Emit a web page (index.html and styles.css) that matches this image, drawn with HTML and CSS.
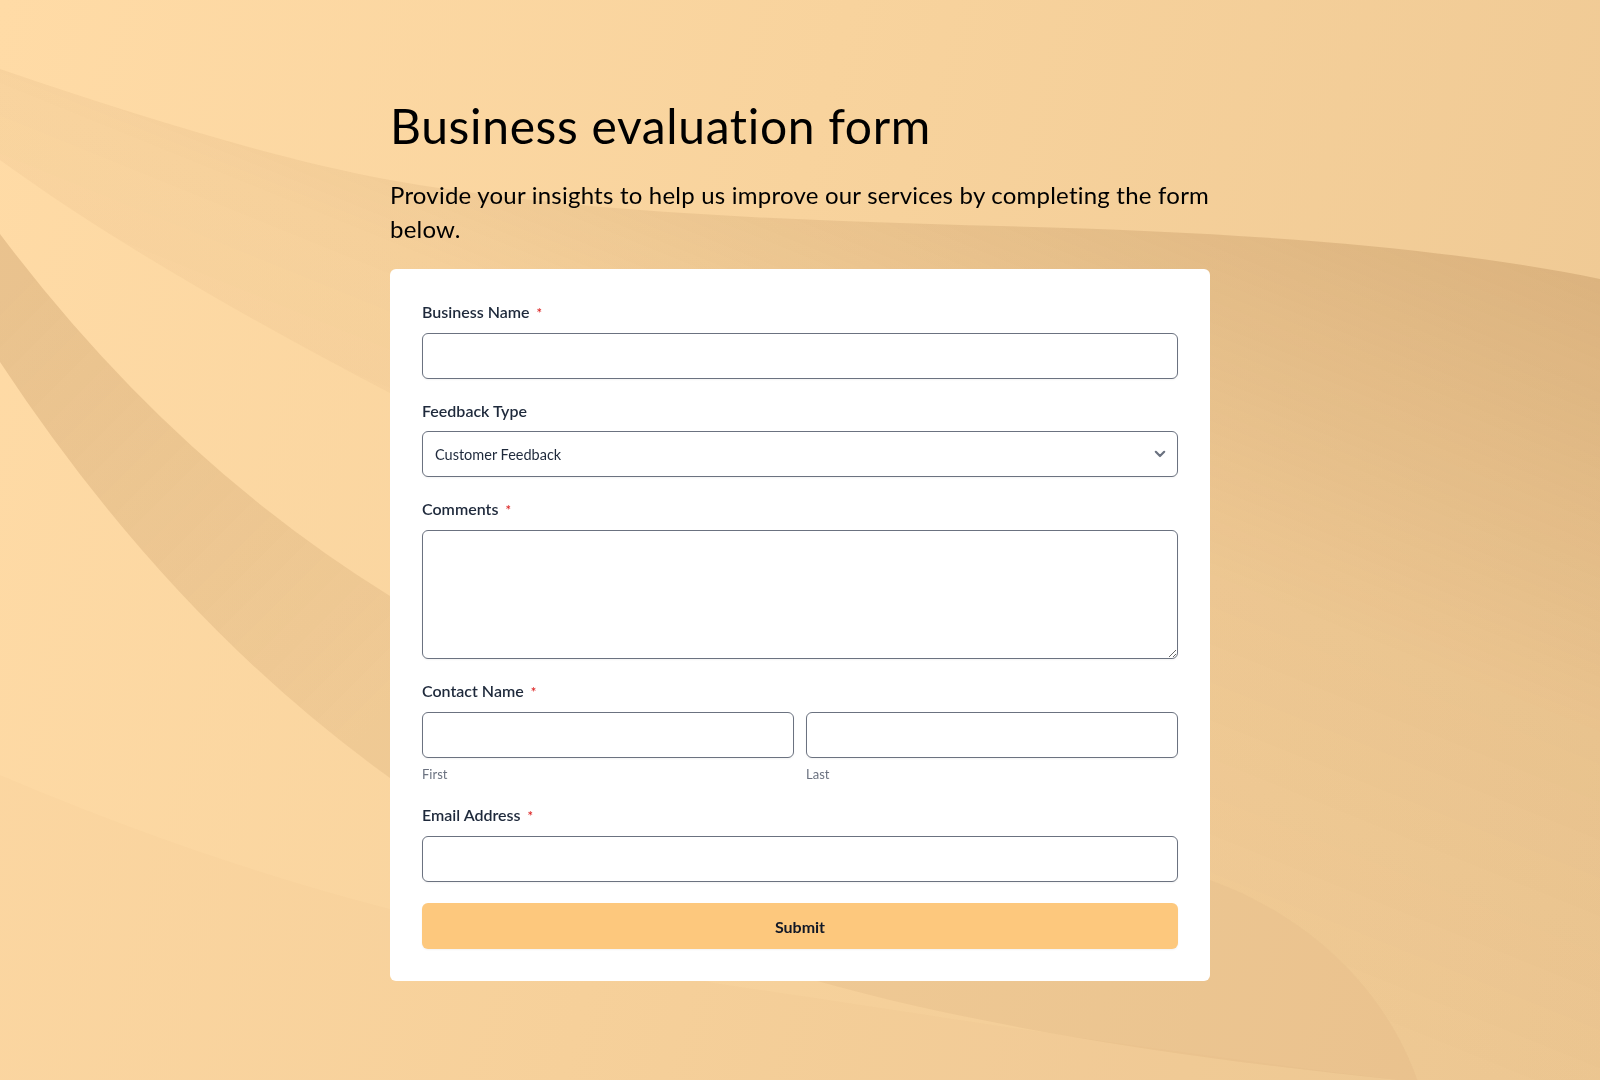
FILE: index.html
```html
<!DOCTYPE html>
<html lang="en">
<head>
    <meta charset="UTF-8">
    <meta name="viewport" content="width=device-width, initial-scale=1.0">
    <title>Business evaluation form</title>
    <link rel="stylesheet" href="styles.css">
</head>
<body>

<!-- Soft wave shapes behind the form -->
<svg class="backdrop" viewBox="0 0 1600 1080" preserveAspectRatio="none" aria-hidden="true">
    <defs>
        <linearGradient id="wave-top" gradientUnits="userSpaceOnUse" x1="1600" y1="260" x2="1300" y2="1000">
            <stop offset="0" stop-color="#966432" stop-opacity="0.23"/>
            <stop offset="0.55" stop-color="#966432" stop-opacity="0.06"/>
            <stop offset="1" stop-color="#966432" stop-opacity="0.02"/>
        </linearGradient>
        <linearGradient id="wave-band" gradientUnits="userSpaceOnUse" x1="0" y1="300" x2="400" y2="700">
            <stop offset="0" stop-color="#966432" stop-opacity="0.2"/>
            <stop offset="1" stop-color="#966432" stop-opacity="0.1"/>
        </linearGradient>
    </defs>
    <path d="M0,69 C150,120 280,160 390,180 C560,210 760,220 1000,226 C1250,232 1450,248 1600,279 L1600,1082 L1418,1082 C1390,1000 1320,920 1210,880 L800,600 C560,500 470,440 390,393 C250,320 110,240 0,160 Z" fill="url(#wave-top)"/>
    <path d="M0,234 Q170,460 390,596 L600,700 L600,860 L390,778 Q170,620 0,362 Z" fill="url(#wave-band)"/>
    <path d="M0,775 Q200,860 390,909 L714,983 C918,1013 1122,1047 1418,1082 L0,1082 Z" fill="#966432" fill-opacity="0.02"/>
    <path d="M600,900 C800,1000 1100,1050 1418,1082 C1390,1000 1320,920 1210,880 Z" fill="#966432" fill-opacity="0.07"/>
</svg>

<main class="page">
    <h1 class="form-title">Business evaluation form</h1>
    <p class="form-intro">Provide your insights to help us improve our services by completing the form below.</p>

    <form class="form-card" onsubmit="return false;">
        <div class="field">
            <label class="field-label" for="business-name">Business Name<span class="required">*</span></label>
            <input type="text" id="business-name" class="control">
        </div>

        <div class="field">
            <label class="field-label" for="feedback-type">Feedback Type</label>
            <div class="select-wrap">
                <select id="feedback-type" class="control select">
                    <option>Customer Feedback</option>
                    <option>Partner Feedback</option>
                    <option>Internal Review</option>
                </select>
                <svg class="select-chevron" width="12" height="8" viewBox="0 0 12 8" aria-hidden="true">
                    <path d="M1.8 1.8 L6 6 L10.2 1.8" fill="none" stroke="#6b7280" stroke-width="2.2" stroke-linecap="round" stroke-linejoin="round"/>
                </svg>
            </div>
        </div>

        <div class="field">
            <label class="field-label" for="comments">Comments<span class="required">*</span></label>
            <textarea id="comments" class="control textarea"></textarea>
        </div>

        <div class="field">
            <label class="field-label" for="contact-first">Contact Name<span class="required">*</span></label>
            <div class="name-row">
                <div>
                    <input type="text" id="contact-first" class="control">
                    <span class="sub-label">First</span>
                </div>
                <div>
                    <input type="text" id="contact-last" class="control">
                    <span class="sub-label">Last</span>
                </div>
            </div>
        </div>

        <div class="field">
            <label class="field-label" for="email">Email Address<span class="required">*</span></label>
            <input type="email" id="email" class="control">
        </div>

        <button type="submit" class="submit-btn">Submit</button>
    </form>
</main>

</body>
</html>
```

FILE: styles.css
```css
body {
    margin: 0;
    min-height: 100vh;
    font-family: Lato, "Liberation Sans", sans-serif;
    font-variant-ligatures: none;
    color: #000;
    background: linear-gradient(105deg, #ffdba6 0%, #f8d39d 45%, #eec893 100%);
}
.backdrop {
    position: fixed;
    top: 0;
    left: 0;
    width: 100%;
    height: 100%;
    z-index: -1;
}
.page {
    width: 820px;
    margin: 0 auto;
    padding: 97px 0 60px;
}
.form-title {
    margin: 0 0 23px;
    font-size: 48px;
    line-height: 58px;
    font-weight: 400;
    letter-spacing: 0.65px;
}
.form-intro {
    margin: 0 0 23px;
    font-size: 24px;
    line-height: 34px;
    letter-spacing: 0.22px;
}
.form-card {
    background: #fff;
    border-radius: 6px;
    padding: 32px;
}
.field {
    margin-bottom: 21px;
}
.field-label {
    display: block;
    margin-bottom: 9px;
    font-size: 16px;
    line-height: 22px;
    font-weight: 600;
    color: #1e293b;
}
.required {
    margin-left: 7px;
    font-size: 13px;
    color: #dc2626;
}
.control {
    display: block;
    width: 100%;
    height: 46px;
    box-sizing: border-box;
    padding: 0 12px;
    border: 1px solid #6b7280;
    border-radius: 6px;
    background: #fff;
    font-family: inherit;
    font-size: 14.5px;
    color: #1e293b;
    box-shadow: 0 1px 2px rgba(0, 0, 0, 0.05);
}
.select-wrap {
    position: relative;
}
.select {
    appearance: none;
    -webkit-appearance: none;
}
.select-chevron {
    position: absolute;
    right: 12px;
    top: 19px;
    pointer-events: none;
}
.textarea {
    height: 129px;
    padding: 10px 12px;
    resize: vertical;
}
.name-row {
    display: grid;
    grid-template-columns: 1fr 1fr;
    gap: 12px;
}
.sub-label {
    display: block;
    margin-top: 7px;
    font-size: 13px;
    line-height: 18px;
    color: #6b7280;
}
.submit-btn {
    display: block;
    width: 100%;
    height: 46px;
    margin-top: 5px;
    border: 0;
    border-radius: 6px;
    background: #fdc87d;
    font-family: inherit;
    font-size: 16px;
    font-weight: 700;
    color: #111827;
    box-shadow: 0 1px 2px rgba(0, 0, 0, 0.05);
    cursor: pointer;
}
```
